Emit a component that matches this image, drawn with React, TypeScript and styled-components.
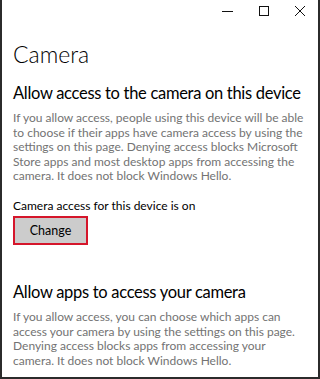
import React from "react";
import styled, { createGlobalStyle } from "styled-components";

const Global = createGlobalStyle`
  html, body { margin: 0; padding: 0; background: #fff; }
  body { font-family: Lato, "Open Sans", sans-serif; }
`;

const Window = styled.div`
  box-sizing: border-box;
  width: 320px;
  height: 379px;
  border: 2px solid #2b2b2b;
  border-top: none;
  background: #fff;
  overflow: hidden;
  display: flex;
  flex-direction: column;
`;

const TitleBar = styled.div`
  height: 22px;
  display: flex;
  justify-content: flex-end;
  align-items: center;
`;

const CaptionButton = styled.div`
  width: 36px;
  height: 22px;
  display: flex;
  align-items: center;
  justify-content: center;
`;

const Content = styled.div`
  padding: 16px 0 0 11px;
  display: flex;
  flex-direction: column;
`;

const PageTitle = styled.h1`
  margin: 0;
  font-family: Lato, sans-serif;
  font-weight: 300;
  font-size: 23px;
  line-height: 32px;
  color: #000;
`;

const SectionTitle = styled.h2<{ $top: number }>`
  margin: ${(p) => p.$top}px 0 0;
  font-family: Lato, sans-serif;
  font-weight: 400;
  font-size: 16.5px;
  letter-spacing: -0.3px;
  line-height: 24px;
  color: #000;
  white-space: nowrap;
`;

const Body = styled.p<{ $top: number }>`
  margin: ${(p) => p.$top}px 0 0;
  font-size: 12px;
  line-height: 14.6px;
  color: #737373;
  width: 292px;
`;

const Status = styled.div`
  margin-top: 14px;
  font-size: 12px;
  line-height: 16px;
  color: #000;
`;

const ChangeButton = styled.button`
  margin-top: 2px;
  box-sizing: border-box;
  width: 75px;
  height: 29px;
  border: 2px solid #d5162b;
  background: #cccccc;
  font-family: Lato, sans-serif;
  font-size: 12.5px;
  color: #000;
  padding: 0;
`;

export default function App() {
  return (
    <>
      <Global />
      <Window>
        <TitleBar>
          <CaptionButton>
            <svg width="12" height="12" viewBox="0 0 12 12">
              <line x1="0" y1="6.5" x2="11" y2="6.5" stroke="#111" strokeWidth="1" />
            </svg>
          </CaptionButton>
          <CaptionButton>
            <svg width="12" height="12" viewBox="0 0 12 12">
              <rect x="1.5" y="1.5" width="9" height="9" fill="none" stroke="#111" strokeWidth="1" />
            </svg>
          </CaptionButton>
          <CaptionButton>
            <svg width="12" height="12" viewBox="0 0 12 12">
              <path d="M1 1L11 11M11 1L1 11" stroke="#111" strokeWidth="1" />
            </svg>
          </CaptionButton>
        </TitleBar>
        <Content>
          <PageTitle>Camera</PageTitle>
          <SectionTitle $top={11}>Allow access to the camera on this device</SectionTitle>
          <Body $top={6}>
            If you allow access, people using this device will be able to choose if their apps
            have camera access by using the settings on this page. Denying access blocks Microsoft
            Store apps and most desktop apps from accessing the camera. It does not block Windows
            Hello.
          </Body>
          <Status>Camera access for this device is on</Status>
          <ChangeButton>Change</ChangeButton>
          <SectionTitle $top={35}>Allow apps to access your camera</SectionTitle>
          <Body $top={6}>
            If you allow access, you can choose which apps can access your camera by using the
            settings on this page. Denying access blocks apps from accessing your camera. It does
            not block Windows Hello.
          </Body>
        </Content>
      </Window>
    </>
  );
}
